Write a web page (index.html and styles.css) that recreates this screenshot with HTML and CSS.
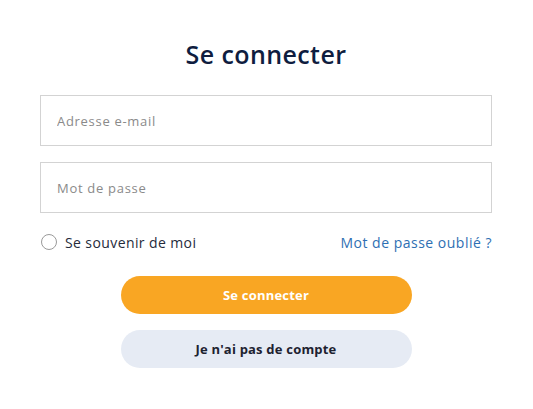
FILE: index.html
```html
<!DOCTYPE html>
<html lang="fr">
<head>
<meta charset="utf-8">
<title>Se connecter</title>
<link rel="stylesheet" href="styles.css">
</head>
<body>
<main class="login">
  <h1 class="login__title">Se connecter</h1>
  <form class="login__form">
    <input class="field" type="email" placeholder="Adresse e-mail">
    <input class="field" type="password" placeholder="Mot de passe">
    <div class="options">
      <label class="remember">
        <span class="radio"></span>
        <span>Se souvenir de moi</span>
      </label>
      <a class="forgot" href="#">Mot de passe oublié ?</a>
    </div>
    <div class="actions">
      <button type="button" class="btn btn--primary">Se connecter</button>
      <button type="button" class="btn btn--secondary">Je n'ai pas de compte</button>
    </div>
  </form>
</main>
</body>
</html>
```
FILE: styles.css
```css
* { box-sizing: border-box; }
html, body { margin: 0; padding: 0; background: #ffffff; }
body {
  font-family: "Open Sans", "Noto Sans", sans-serif;
  color: #1c2437;
}
.login {
  padding: 40px 41px 0 40px;
}
.login__title {
  margin: 0 0 27px;
  text-align: center;
  font-size: 25px;
  font-weight: 600;
  color: #0f1d3f;
  line-height: 28px;
  letter-spacing: 0.4px;
}
.login__form {
  display: flex;
  flex-direction: column;
}
.field {
  display: block;
  width: 100%;
  height: 51px;
  border: 1px solid #d3d3d3;
  border-radius: 0;
  padding: 0 16px;
  font-family: inherit;
  font-size: 13px;
  color: #333;
  outline: none;
  margin-bottom: 16px;
}
.field::placeholder { color: #8a8a8a; font-weight: 400; letter-spacing: 0.7px; }
.options {
  display: flex;
  justify-content: space-between;
  align-items: center;
  height: 26px;
}
.remember {
  display: flex;
  align-items: center;
  gap: 8px;
  font-size: 14px;
  color: #252b3b;
  letter-spacing: 0.4px;
}
.radio {
  width: 16px;
  height: 16px;
  border: 1px solid #9a9a9a;
  border-radius: 50%;
  margin-left: 1px;
}
.forgot {
  font-size: 14px;
  color: #2e6fb3;
  text-decoration: none;
  letter-spacing: 0.5px;
}
.actions {
  display: flex;
  flex-direction: column;
  align-items: center;
  gap: 16px;
  margin-top: 21px;
}
.btn {
  width: 291px;
  height: 38px;
  border: 0;
  border-radius: 19px;
  font-family: inherit;
  font-size: 13px;
  font-weight: 700;
  letter-spacing: 0.2px;
  cursor: pointer;
}
.btn--primary { background: #f9a623; color: #ffffff; }
.btn--secondary { background: #e6ebf4; color: #1d2230; }
```
